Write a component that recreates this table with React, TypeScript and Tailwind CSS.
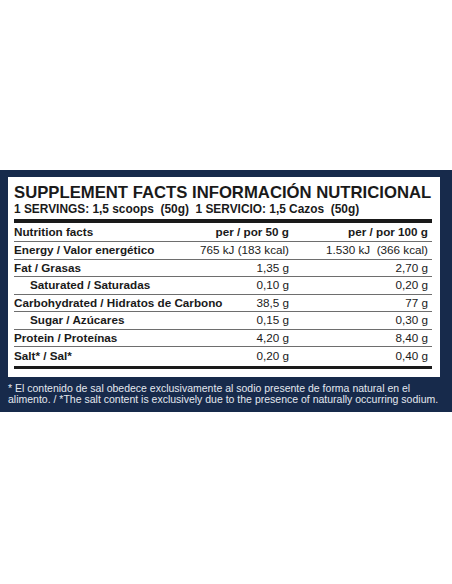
import React from "react";

type Row = { label: string; a: string; b: string; indent?: boolean; head?: boolean };

const rows: Row[] = [
  { label: "Nutrition facts", a: "per / por 50 g", b: "per / por 100 g", head: true },
  { label: "Energy / Valor energético", a: "765 kJ (183 kcal)", b: "1.530 kJ  (366 kcal)" },
  { label: "Fat / Grasas", a: "1,35 g", b: "2,70 g" },
  { label: "Saturated / Saturadas", a: "0,10 g", b: "0,20 g", indent: true },
  { label: "Carbohydrated / Hidratos de Carbono", a: "38,5 g", b: "77 g" },
  { label: "Sugar / Azúcares", a: "0,15 g", b: "0,30 g", indent: true },
  { label: "Protein / Proteínas", a: "4,20 g", b: "8,40 g" },
  { label: "Salt* / Sal*", a: "0,20 g", b: "0,40 g" },
];

export default function App() {
  return (
    <div
      className="w-[452px] h-[584px] bg-white pt-[170px]"
      style={{ fontFamily: '"Liberation Sans", Arial, sans-serif' }}
    >
      <div className="bg-[#172a4b] pt-[7px] pl-[8px] pr-[12px] pb-[7px]">
        <div className="bg-white pl-[6px] pr-[8px] pt-[7px] pb-[8px] text-[#1a1a1a]">
          <div className="text-[16.7px] leading-[17px] font-bold whitespace-nowrap">
            SUPPLEMENT FACTS INFORMACIÓN NUTRICIONAL
          </div>
          <div className="mt-[2px] text-[11.9px] leading-[13px] font-bold whitespace-pre">
            {"1 SERVINGS: 1,5 scoops  (50g)  1 SERVICIO: 1,5 Cazos  (50g)"}
          </div>
          <div className="mt-[3px] h-[4px] bg-[#1a1a1a]" />
          {rows.map((r, i) => {
            const last = i === rows.length - 1;
            return (
              <div
                key={r.label}
                className={`grid grid-cols-[minmax(0,1fr)_90px_143px] items-center text-[11.7px] leading-[14px] ${
                  i === 0 ? "h-[19px]" : "h-[17.5px]"
                } ${last ? "" : "border-b border-[#6e6e6e]"}`}
              >
                <div className={`font-bold whitespace-nowrap ${r.indent ? "pl-[16px]" : ""}`}>
                  {r.label}
                </div>
                <div className={`text-right whitespace-pre ${r.head ? "font-bold" : ""}`}>{r.a}</div>
                <div className={`text-right whitespace-pre pr-[4px] ${r.head ? "font-bold" : ""}`}>{r.b}</div>
              </div>
            );
          })}
          <div className="mt-[1.5px] h-[3px] bg-[#1a1a1a]" />
        </div>
        <div className="mt-[6px] text-[10.5px] leading-[11px] text-[#e3e8ef] whitespace-nowrap -mr-[4px]">
          * El contenido de sal obedece exclusivamente al sodio presente de forma natural en el
          <br />
          alimento. / *The salt content is exclusively due to the presence of naturally occurring sodium.
        </div>
      </div>
    </div>
  );
}
